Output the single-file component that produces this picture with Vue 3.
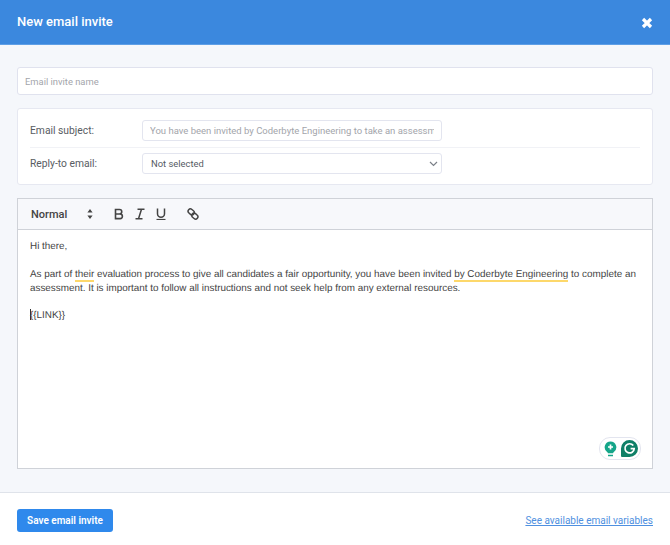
<template>
  <div class="modal">
    <div class="modal-header">
      <div class="modal-title">New email invite</div>
      <svg class="close-icon" width="12" height="12" viewBox="0 0 12 12">
        <path d="M2 2l8 8M10 2l-8 8" stroke="#ffffff" stroke-width="3.2" fill="none" />
      </svg>
    </div>

    <div class="modal-body">
      <input class="name-input" type="text" placeholder="Email invite name" />

      <div class="settings-card">
        <div class="settings-row first">
          <label class="settings-label">Email subject:</label>
          <input class="subject-input" type="text" :placeholder="subjectPlaceholder" />
        </div>
        <div class="settings-row">
          <label class="settings-label">Reply-to email:</label>
          <div class="select-box">
            <span>Not selected</span>
            <svg width="9" height="6" viewBox="0 0 9 6">
              <path d="M1 1l3.5 3.5L8 1" stroke="#7b8088" stroke-width="1.2" fill="none" />
            </svg>
          </div>
        </div>
      </div>

      <div class="editor">
        <div class="toolbar">
          <div class="format-select">
            <span>Normal</span>
            <svg width="6" height="10" viewBox="0 0 6 10">
              <path d="M3 0l2.600 3.600H.4zM3 10L.4 6.400h5.200z" fill="#444" />
            </svg>
          </div>
          <div class="tool-icons">
            <svg width="12" height="12" viewBox="0 0 12 12">
              <path d="M2.500 1.500h4a2.200 2.200 0 0 1 0 4.500h-4zM2.500 6h4.600a2.300 2.300 0 0 1 0 4.600H2.500z" stroke="#444" stroke-width="1.600" fill="none" />
            </svg>
            <svg width="12" height="12" viewBox="0 0 12 12">
              <path d="M3.500 1.200h7M1.500 10.800h7M7.500 1.200l-3 9.600" stroke="#444" stroke-width="1.500" fill="none" />
            </svg>
            <svg width="12" height="12" viewBox="0 0 12 12">
              <path d="M2.500 .5v5.200a3.500 3.500 0 0 0 7 0V.5" stroke="#444" stroke-width="1.500" fill="none" />
              <path d="M1.500 11.500h9" stroke="#444" stroke-width="1.200" fill="none" />
            </svg>
            <svg class="link-icon" width="12" height="12" viewBox="0 0 12 12">
              <rect x="0.900" y="1.600" width="6.600" height="4.600" rx="2.300" transform="rotate(40 4.200 3.900)" stroke="#444" stroke-width="1.500" fill="none" />
              <rect x="4.500" y="5.800" width="6.600" height="4.600" rx="2.300" transform="rotate(40 7.800 8.100)" stroke="#444" stroke-width="1.500" fill="none" />
            </svg>
          </div>
        </div>
        <div class="editor-content">
          <p>Hi there,</p>
          <p class="blank"></p>
          <p>
            As part of <span class="mark">their</span> evaluation process to give all candidates a fair
            opportunity, you have been invited <span class="mark">by Coderbyte Engineering</span> to
            complete an assessment. It is important to follow all instructions and not seek help from
            any external resources.
          </p>
          <p class="blank short"></p>
          <p><span class="caret"></span>{{ linkToken }}</p>

          <div class="grammarly">
            <svg width="13" height="16" viewBox="0 0 13 16">
              <path d="M6.500 .5a5.800 5.800 0 0 1 3.400 10.500c-.5.4-.7.8-.8 1.300H3.900c-.1-.5-.3-.9-.8-1.300A5.800 5.800 0 0 1 6.500 .5z" fill="#15a589" />
              <path d="M6.500 3.500v5M4 6h5" stroke="#ffffff" stroke-width="1.700" fill="none" />
              <path d="M4 14.500h5" stroke="#15a589" stroke-width="1.500" fill="none" />
            </svg>
            <svg width="17" height="17" viewBox="0 0 17 17">
              <path d="M8.500 0a8.500 8.500 0 1 1 0 17H1a1 1 0 0 1-1-1V8.500A8.500 8.500 0 0 1 8.500 0z" fill="#0f7f67" />
              <path d="M12.300 5.600a4.600 4.600 0 1 0 .9 3h-3.600" stroke="#ffffff" stroke-width="1.700" fill="none" />
            </svg>
          </div>
        </div>
      </div>
    </div>

    <div class="modal-footer">
      <button class="save-btn" type="button">Save email invite</button>
      <a class="variables-link" href="#">See available email variables</a>
    </div>
  </div>
</template>

<script setup>
const subjectPlaceholder = 'You have been invited by Coderbyte Engineering to take an assessment'
const linkToken = '{{LINK}}'
</script>

<style>
html,
body {
  margin: 0;
  background: #ffffff;
}
</style>

<style scoped>
.modal {
  width: 670px;
  height: 545px;
  display: flex;
  flex-direction: column;
  overflow: hidden;
  font-family: Roboto, "Noto Sans", sans-serif;
  background: #f5f7fb;
}

.modal-header {
  height: 44px;
  flex-shrink: 0;
  display: flex;
  justify-content: space-between;
  align-items: center;
  padding: 0 17px;
  background: #3b88de;
  border-bottom: 1px solid #5f9fe6;
}

.modal-title {
  font-size: 13px;
  font-weight: 500;
  color: #ffffff;
  margin-top: -2px;
}

.close-icon {
  margin-top: 1px;
}

.modal-body {
  flex: 1;
  padding: 22px 17px 0;
  display: flex;
  flex-direction: column;
}

input {
  box-sizing: border-box;
  font-family: inherit;
  background: #ffffff;
  outline: none;
}

.name-input {
  width: 636px;
  height: 28px;
  flex-shrink: 0;
  padding: 0 7px;
  font-size: 9.400px;
  border: 1px solid #e0e2ee;
  border-radius: 3px;
}

.name-input::placeholder,
.subject-input::placeholder {
  color: #a3a5ab;
  opacity: 1;
}

.settings-card {
  margin-top: 13px;
  height: 77px;
  box-sizing: border-box;
  padding: 11px 12px 0;
  background: #ffffff;
  border: 1px solid #e6e8f1;
  border-radius: 3px;
}

.settings-row {
  display: flex;
  align-items: center;
}

.settings-row.first {
  padding-bottom: 6px;
  margin-bottom: 5px;
  border-bottom: 1px solid #f1f2f6;
}

.settings-label {
  width: 112px;
  font-size: 10.300px;
  color: #585c62;
}

.subject-input {
  width: 300px;
  height: 21px;
  padding: 0 7px;
  font-size: 9.500px;
  border: 1px solid #e3e5ef;
  border-radius: 3px;
}

.select-box {
  box-sizing: border-box;
  width: 300px;
  height: 21px;
  padding: 0 3px 0 8px;
  display: flex;
  justify-content: space-between;
  align-items: center;
  font-size: 9.400px;
  color: #555b63;
  border: 1px solid #e3e5ef;
  border-radius: 3px;
}

.editor {
  margin-top: 13px;
  height: 271px;
  box-sizing: border-box;
  display: flex;
  flex-direction: column;
  background: #ffffff;
  border: 1px solid #cfd2d8;
}

.toolbar {
  height: 31px;
  flex-shrink: 0;
  box-sizing: border-box;
  display: flex;
  align-items: center;
  padding-left: 13px;
  background: #f7f8fb;
  border-bottom: 1px solid #cfd2d8;
}

.format-select {
  width: 62px;
  display: flex;
  justify-content: space-between;
  align-items: center;
  font-size: 11px;
  font-weight: 500;
  color: #444444;
}

.tool-icons {
  display: flex;
  align-items: center;
  gap: 9px;
  margin-left: 20px;
}

.link-icon {
  margin-left: 11px;
}

.editor-content {
  flex: 1;
  position: relative;
  padding: 10px 12px 8px;
  font-family: "Liberation Sans", Arial, sans-serif;
  font-size: 9.900px;
  line-height: 14px;
  text-rendering: geometricPrecision;
  color: #444444;
}

.editor-content p {
  margin: 0;
}

.editor-content .blank {
  height: 14px;
}

.editor-content .blank.short {
  height: 13px;
}

.mark {
  border-bottom: 2px solid #fdd86b;
}

.caret {
  display: inline-block;
  width: 1px;
  height: 11px;
  margin-right: -1px;
  vertical-align: -2px;
  background: #333333;
}

.grammarly {
  position: absolute;
  right: 11px;
  bottom: 8px;
  display: flex;
  align-items: center;
  gap: 4px;
  padding: 2px 2px 2px 4px;
  background: #ffffff;
  border: 1px solid #e3e5ef;
  border-radius: 11px;
}

.modal-footer {
  height: 53px;
  flex-shrink: 0;
  box-sizing: border-box;
  display: flex;
  justify-content: space-between;
  align-items: center;
  padding: 3px 17px 0;
  background: #ffffff;
  border-top: 1px solid #dfe3ea;
}

.save-btn {
  width: 96px;
  height: 23px;
  padding: 0;
  font-family: inherit;
  font-size: 10px;
  font-weight: 600;
  color: #ffffff;
  background: #2f89ec;
  border: none;
  border-radius: 3px;
}

.variables-link {
  font-size: 10px;
  color: #4f90e0;
}
</style>
